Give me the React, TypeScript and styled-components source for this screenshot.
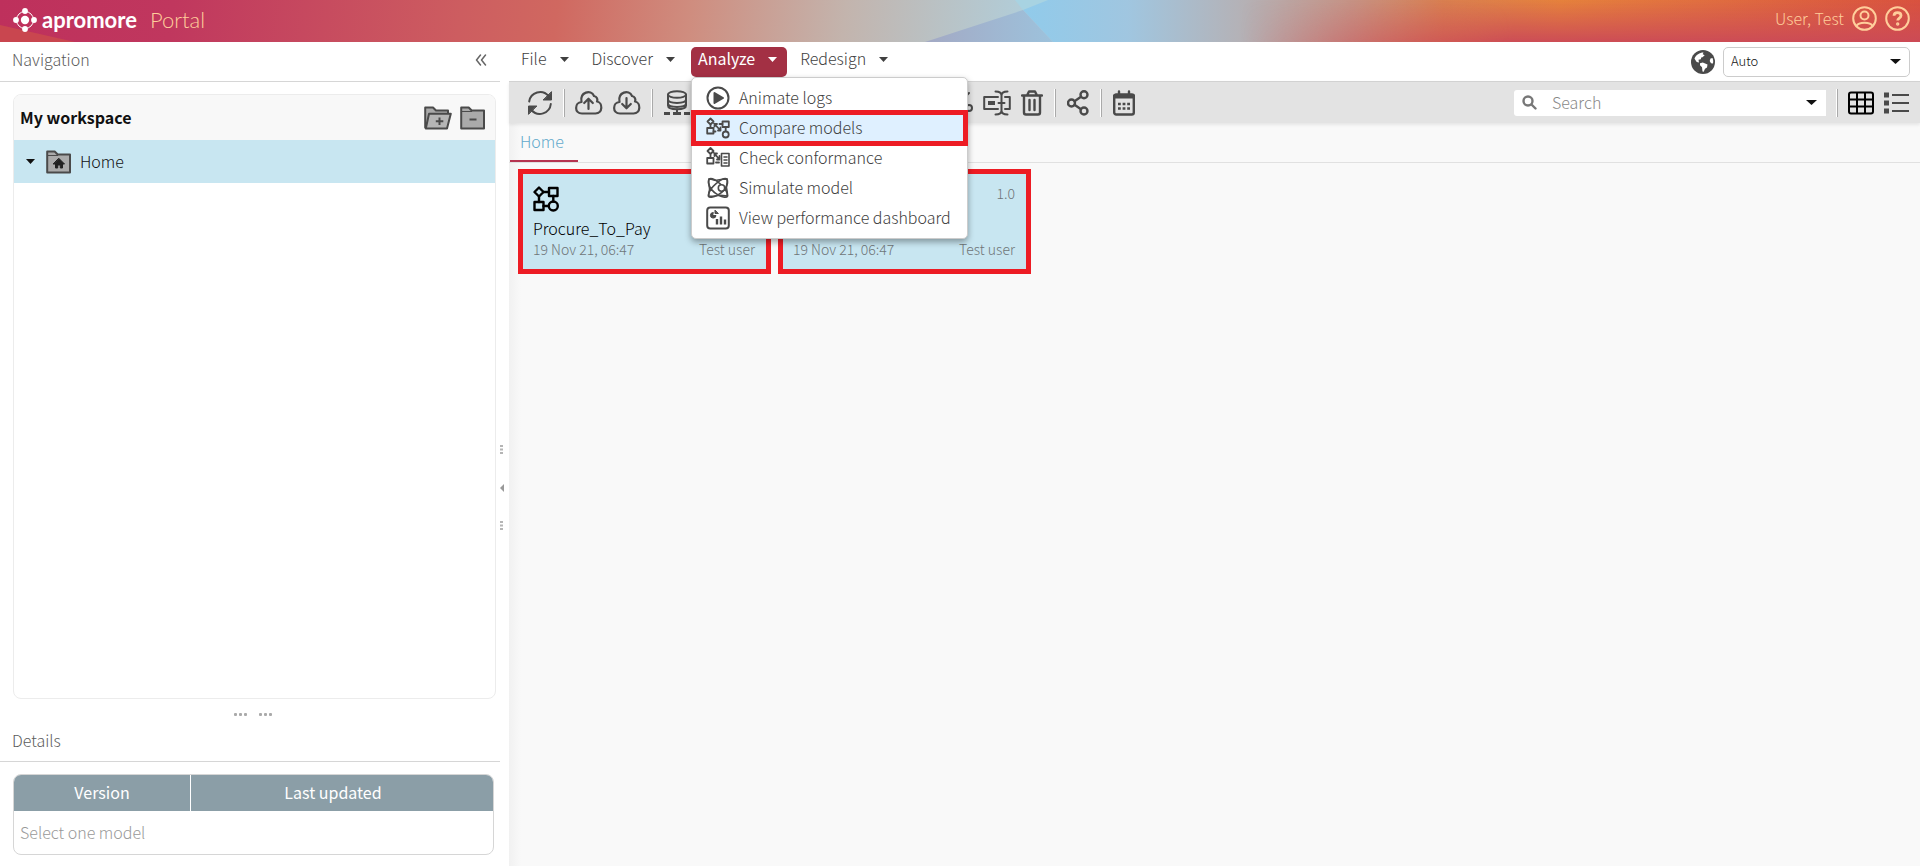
import React from 'react';
import styled, { createGlobalStyle, css } from 'styled-components';

const Global = createGlobalStyle`
  * { box-sizing: border-box; }
  html, body, #root { height: 100%; }
  body {
    margin: 0;
    color: #404040;
    background: #f9f9f9;
    font: 300 16px/24px "Noto Sans CJK SC", "Noto Sans", sans-serif;
  }
  button, input, select { font: inherit; color: inherit; }
  button { border: 0; padding: 0; background: none; cursor: pointer; }
  h1, h2, p { margin: 0; font: inherit; }
  svg { display: block; flex: none; }
`;

const Page = styled.div`
  display: flex;
  flex-direction: column;
  min-height: 100vh;
`;
const Label = styled.span`
  padding-bottom: 2px;
`;

const Header = styled.header`
  display: flex;
  align-items: center;
  justify-content: space-between;
  position: relative;
  height: 42px;
  padding: 0 10px 0 13px;
  overflow: hidden;
  background: linear-gradient(97deg, #be305c 0%, #c0375e 9%, #cd5d60 24%, #d06860 29%, #cf8d7f 36%, #c3b4ad 44%, #b9c2c5 49%, #b0cfdc 54%);
`;
const Backdrop = styled.svg`
  position: absolute;
  inset: 0;
  width: 100%;
  height: 100%;
`;
const Brand = styled.a`
  display: flex;
  align-items: center;
  position: relative;
  padding-bottom: 2px;
  color: #fff;
  text-decoration: none;
  font-family: Lato, sans-serif;
  font-size: 22px;
  line-height: 24px;
  font-weight: 700;
  gap: 5px;
`;
const Product = styled.span`
  margin-left: 8px;
  color: #ffce9b;
  font-weight: 300;
`;
const Account = styled.div`
  display: flex;
  align-items: center;
  position: relative;
  gap: 8px;
  color: #ffce9b;
  padding-bottom: 5px;
`;

const Body = styled.div`
  display: flex;
  flex: 1;
`;
const Sidebar = styled.aside`
  display: flex;
  flex-direction: column;
  width: 500px;
  background: #fff;
`;
const PanelTitle = styled.h2`
  display: flex;
  align-items: center;
  justify-content: space-between;
  height: 40px;
  padding: 0 13px 3px 12px;
  border-bottom: 1px solid #d6d6d6;
  color: #5c5c5c;
`;
const Workspace = styled.section`
  flex: 1;
  margin: 12px 4px 0 13px;
  border: 1px solid #ececec;
  border-radius: 8px;
  overflow: hidden;
`;
const WorkspaceHead = styled.div`
  display: flex;
  align-items: center;
  gap: 8px;
  height: 45px;
  padding: 0 10px 0 6px;
  background: #f8f8f8;
  color: #111;
  font-weight: 700;
`;
const Grow = styled.span`
  flex: 1;
`;
const TreeRow = styled.div`
  display: flex;
  align-items: center;
  height: 43px;
  padding-left: 12px;
  background: #c8e6f1;
  color: #111;
`;
const TreeLabel = styled(Label)`
  margin-left: 9px;
`;
const TreeToggle = styled.button`
  margin-right: 11px;
`;
const RowHandle = styled.div`
  display: flex;
  align-items: center;
  justify-content: center;
  gap: 12px;
  height: 30px;
  padding-left: 6px;
`;
const Details = styled.section`
  padding-bottom: 11px;
`;
const DetailsTitle = styled(PanelTitle)`
  height: 33px;
  padding-bottom: 9px;
`;
const TableFrame = styled.div`
  margin: 12px 6px 0 13px;
  border: 1px solid #d6d6d6;
  border-radius: 8px;
  overflow: hidden;
`;
const Table = styled.table`
  width: 100%;
  table-layout: fixed;
  border-collapse: separate;
  border-spacing: 0;
  th {
    height: 36px;
    padding: 0 0 2px;
    background: #8b9ea7;
    color: #fff;
    font-weight: 400;
  }
  th:first-child { width: 176px; }
  th + th { border-left: 1px solid #fff; padding-right: 18px; }
  td {
    height: 43px;
    padding: 0 6px 2px;
    color: #999;
  }
`;
const Splitter = styled.div`
  display: flex;
  flex-direction: column;
  align-items: center;
  justify-content: center;
  gap: 29px;
  width: 9px;
  padding: 68px 6px 0 0;
  background: #fff;
`;

const Main = styled.main`
  flex: 1;
  min-width: 0;
  background: linear-gradient(90deg, #f1f1f1, #f9f9f9 12px);
`;
const MenuBar = styled.nav`
  display: flex;
  align-items: center;
  gap: 6px;
  height: 39px;
  padding: 0 10px 0 5px;
  background: #fff;
`;
const MenuHolder = styled.div`
  position: relative;
`;
const MenuButton = styled.button<{ $open?: boolean }>`
  display: flex;
  align-items: center;
  gap: 13px;
  height: 30px;
  padding: 0 10px 5px 7px;
  border-radius: 5px;
  ${(p) => p.$open && css`
    background: #a33044;
    color: #fff;
    font-weight: 400;
  `}
`;
const Menu = styled.div`
  position: absolute;
  z-index: 2;
  top: 30px;
  left: 0;
  width: 277px;
  padding: 5px 0;
  border: 1px solid #ccc;
  border-radius: 5px;
  background: #fff;
  box-shadow: 0 3px 6px rgba(0, 0, 0, 0.35);
`;
const MenuItem = styled.button<{ $marked?: boolean }>`
  display: flex;
  align-items: center;
  position: relative;
  gap: 9px;
  width: 100%;
  height: 30px;
  padding: 0 14px;
  white-space: nowrap;
  ${(p) => p.$marked && css`
    background: #dff0ff;
    &::after {
      content: '';
      position: absolute;
      inset: -3px -1px;
      border: 5px solid #ed1c24;
    }
  `}
`;
const Language = styled.div`
  display: flex;
  align-items: center;
  gap: 8px;
`;
const SelectBox = styled.div`
  display: flex;
  align-items: center;
  position: relative;
  svg { position: absolute; right: 9px; pointer-events: none; }
`;
const Select = styled.select`
  appearance: none;
  width: 187px;
  height: 30px;
  padding: 0 7px 2px;
  border: 1px solid #ccc;
  border-radius: 5px;
  background: #fff;
  color: #111;
  font-size: 13px;
`;

const Toolbar = styled.div`
  display: flex;
  align-items: center;
  height: 42px;
  padding: 0 10px 0 18px;
  border-top: 1px solid #d2d2d2;
  background: #e3e3e3;
  box-shadow: 0 2px 3px rgba(0, 0, 0, 0.08);
`;
const Tools = styled.div`
  display: flex;
  align-items: center;
  gap: 10px;
`;
const Divider = styled.span`
  width: 2px;
  height: 28px;
  border-left: 1px solid #fff;
  border-right: 1px solid #aaa;
`;
const EditTools = styled(Tools)`
  margin-left: 258px;
  ${Divider} { margin: 0 1px; }
`;
const Search = styled.div`
  display: flex;
  align-items: center;
  width: 312px;
  height: 26px;
  padding: 0 9px 0 8px;
  border-radius: 3px 0 0 3px;
  background: #fff;
`;
const SearchInput = styled.input`
  flex: 1;
  min-width: 0;
  margin-left: 15px;
  padding: 0 0 2px;
  border: 0;
  outline: 0;
  background: none;
  &::placeholder { color: #888; opacity: 1; }
`;

const Tabs = styled.div`
  display: flex;
  height: 40px;
  border-bottom: 1px solid #e1e1e1;
`;
const Tab = styled.a`
  height: 39px;
  margin-left: 1px;
  padding: 6px 14px 0 10px;
  border-bottom: 2px solid #b63551;
  color: #62a9cb;
  text-decoration: none;
`;
const Cards = styled.div`
  display: flex;
  gap: 7px;
  padding: 6px 9px;
`;
const Card = styled.article`
  display: flex;
  flex-direction: column;
  width: 253px;
  height: 105px;
  padding: 12px 11px 9px 10px;
  border: 5px solid #ed1c24;
  background: #c8e6f1;
`;
const CardRow = styled.div`
  display: flex;
  justify-content: space-between;
  color: #6f7578;
  font-size: 14px;
  line-height: 20px;
`;
const Version = styled.span`
  line-height: 14px;
`;
const CardTitle = styled.h2`
  margin-top: 5px;
  color: #000;
  line-height: 22px;
`;

const Caret = ({ color = '#404040', size = 9 }: { color?: string; size?: number }) => (
  <svg width={size} height="5" viewBox="0 0 9 5" preserveAspectRatio="none"><path d="M0 0h9L4.500 5z" fill={color} /></svg>
);

const Stroke = ({ w = 26, h = 26, sw = 2.400, color = '#4a4a4a', children }: { w?: number; h?: number; sw?: number; color?: string; children: React.ReactNode }) => (
  <svg width={w} height={h} viewBox={`0 0 ${w} ${h}`} fill="none" stroke={color} strokeWidth={sw} strokeLinecap="round" strokeLinejoin="round">{children}</svg>
);

const Logo = () => (
  <svg width="24" height="24" viewBox="0 0 24 24" fill="#fff">
    <circle cx="12" cy="12" r="8.500" fill="none" stroke="#fff" strokeWidth="1" />
    <circle cx="12" cy="12" r="4.200" />
    <circle cx="12" cy="3" r="2.900" /><circle cx="12" cy="21" r="2.900" />
    <circle cx="3" cy="12" r="2.900" /><circle cx="21" cy="12" r="2.900" />
  </svg>
);
const UserIcon = () => (
  <Stroke w={25} h={25} color="#ffce9b" sw={2}>
    <circle cx="12.500" cy="12.500" r="11.300" /><circle cx="12.500" cy="9.500" r="4" />
    <path d="M4.500 20c1.500-3 4.500-3.200 8-3.200s6.500.2 8 3.200" />
  </Stroke>
);
const HelpIcon = () => (
  <Stroke w={25} h={25} color="#ffce9b" sw={2}>
    <circle cx="12.500" cy="12.500" r="11.300" />
    <path d="M9 9.800c.2-4.300 7-4 7-.2 0 2.700-3.300 2.400-3.300 5" strokeWidth="2.800" strokeLinecap="butt" />
    <circle cx="12.700" cy="18" r=".7" />
  </Stroke>
);
const FolderPlus = () => (
  <Stroke w={28} h={24} sw={2}>
    <path d="M1.200 21.500V1.500H9l3 3h12v4" fill="#aaa" />
    <path d="M5 7.800h21.800L23 22.500H1.800z" fill="#b5b5b5" />
    <path d="M15.500 11.500v7.500M11.800 15.200h7.500" strokeLinecap="butt" />
  </Stroke>
);
const FolderBase = ({ children }: { children: React.ReactNode }) => (
  <Stroke w={25} h={24} sw={2}>
    <path d="M1.200 22.500V1.500h7.500l3 3H24v18z" fill="#aaa" /><path d="M2 5.500h9.700" strokeWidth="1" />
    {children}
  </Stroke>
);
const Globe = () => (
  <svg width="24" height="24" viewBox="0 0 24 24">
    <circle cx="12" cy="12" r="12" fill="#4a4a4a" />
    <path d="M3.500 8.500C5 5 8.500 2.500 12.500 2.500l-.8 1.800 2 1-2.200 2-1.300.2-.4 1.800-2.300.5.500 2.700-2.300-.5-1.500-2.300zM9 13.200l2.800-.7 4.700 2-.5 3-2 1.300-1.300 3-1.200-.3-.5-4.200-2-2zM19.500 8.500l2-.5c.8 2 .9 3.500.5 5.500l-2-.3-1.300-2.200z" fill="#fff" />
  </svg>
);
const Refresh = () => (
  <Stroke sw={2}>
    <path d="M2.200 11.500A11 11 0 0 1 21.500 6M23.800 14A11 11 0 0 1 4.500 20" />
    <path d="M24.500 2v8h-8zM1.500 24v-8h8z" fill="#4a4a4a" strokeWidth="1" />
  </Stroke>
);
const Cloud = ({ down }: { down?: boolean }) => (
  <Stroke w={28} h={26} sw={2.200}>
    <path d="M7 23.500C-1 23.500-.5 12.500 6.500 12 4.500 2 16 -1 19 6c3 .5 4 3.500 3 5.500 6 1 6 12-1.500 12z" />
    <path d={down ? 'M13.500 8v10M9.200 14l4.300 4.300 4.300-4.300' : 'M13.500 19V9M9.200 13l4.300-4.300L17.800 13'} />
  </Stroke>
);
const Database = () => (
  <Stroke w={28} h={26} sw={2}>
    <ellipse cx="14" cy="4.500" rx="9" ry="3.300" />
    <path d="M5 4.500v11c0 5 18 5 18 0v-11M5 9.500c0 4.500 18 4.500 18 0M5 13.500c0 4.500 18 4.500 18 0M14 19v4" />
    <path d="M1 23.500h6M10 23.500h8M21 23.500h6" strokeWidth="3" strokeLinecap="butt" />
  </Stroke>
);
const Scissors = () => (
  <Stroke w={24} h={26} sw={2}><path d="M4 3l13 13M20 3L7 16" /><circle cx="5" cy="18" r="3" /><circle cx="20" cy="18" r="3" /></Stroke>
);
const Rename = () => (
  <Stroke w={28} h={26} sw={2}>
    <path d="M15 7H1.200v12H15M22 7h4.800v12H22M12.500 1.500c4 0 6 1.500 6 4 0-2.500 2-4 6-4M12.500 24.500c4 0 6-1.500 6-4 0 2.500 2 4 6 4M18.500 5v16M15.500 13h6" />
    <path d="M5 13h7" strokeWidth="4" strokeLinecap="butt" />
  </Stroke>
);
const Trash = () => (
  <Stroke w={22} h={26} sw={2.400}>
    <path d="M1 5.500h20M3 6v16.500q0 2 2 2h12q2 0 2-2V6M6.500 4.500l1.500-3h6l1.500 3M8.500 10v10M13.500 10v10" />
  </Stroke>
);
const Share = () => (
  <Stroke w={22} h={26} sw={2.400}>
    <circle cx="4.500" cy="13" r="3.500" /><circle cx="17" cy="4.800" r="3.500" /><circle cx="17" cy="21" r="3.500" />
    <path d="M7.500 11.200l6.500-4.400M7.500 14.800l6.500 4.400" />
  </Stroke>
);
const Calendar = () => (
  <Stroke w={22} h={26} sw={2.400}>
    <rect x="1.200" y="4.500" width="19.600" height="20" rx="2" /><path d="M1.200 6.500h19.600" strokeWidth="4" />
    <path d="M6 1.500V6M16 1.500V6" /><path d="M5 14h12M5 18.500h12" strokeWidth="2.600" strokeLinecap="butt" strokeDasharray="2.800 1.800" />
  </Stroke>
);
const GridIcon = () => (
  <Stroke w={26} h={24} sw={2} color="#000">
    <rect x="1" y="1.500" width="24" height="21" rx="2" /><path d="M9 2v20M17 2v20M1 8.500h24M1 15.500h24" />
  </Stroke>
);
const ListIcon = () => (
  <Stroke w={26} h={24} sw={2}>
    <path d="M8 4h17M8 12h17M8 20h17" strokeLinecap="butt" /><path d="M0 4h5M0 12h5M0 20h5" strokeWidth="5" strokeLinecap="butt" />
  </Stroke>
);
const Magnifier = () => (
  <Stroke w={15} h={15} sw={2.400} color="#777"><circle cx="6" cy="6" r="4.500" /><path d="M9.500 9.500l4 4" /></Stroke>
);
const ModelIcon = () => (
  <Stroke w={26} h={26} sw={2.400} color="#000">
    <path d="M6 1.500l4.500 4.500L6 10.500 1.500 6z" /><rect x="16" y="2" width="8.500" height="8" /><rect x="1.500" y="16" width="9" height="8" />
    <circle cx="20.300" cy="20" r="4.500" /><path d="M10.500 6H16M6 10.500V16M20.300 10v5.500M10.500 20h5" />
  </Stroke>
);
const Play = () => (
  <Stroke w={24} h={24} sw={2}><circle cx="12" cy="12" r="10.500" /><path d="M8.500 7l8.500 5-8.500 5z" fill="#4a4a4a" /></Stroke>
);
const Compare = () => (
  <Stroke w={24} h={24} sw={1.800}>
    <path d="M4.500 2.500L7.500 5.500 4.500 8.500 1.500 5.500zM4.500 8.500V12" /><rect x="1.200" y="12" width="6.300" height="5.500" />
    <path d="M8 7.500l6.500 7M8.500 10.500V8h2.500M14.500 11.500v3H12" />
    <rect x="16.500" y="5.500" width="6.300" height="5.500" />
    <path d="M19.700 11v4M13.500 8h3M7.500 15.500h2" /><circle cx="19.700" cy="18.500" r="3" />
  </Stroke>
);
const Conform = () => (
  <Stroke w={24} h={24} sw={1.800}>
    <path d="M4.500 2L7.500 5 4.500 8 1.500 5zM4.500 8v4M8 7l5 6M8.500 10V7.500H11M13.500 10v3.500H11" /><rect x="1.200" y="12" width="6.300" height="5.500" />
    <path d="M15.500 7.500H23v12.500h-7.500zM18 11h3M18 14h3M18 17h3" strokeWidth="1.600" /><path d="M10 16.500h3" />
  </Stroke>
);
const Simulate = () => (
  <Stroke w={24} h={24} sw={1.600}>
    <path d="M3 3c4-2.500 19 9 18.500 17-1 4-17-2-19-13-.2-2 0-3 .5-4zM21 3c-4-2.500-19 9-18.500 17 1 4 17-2 19-13 .2-2 0-3-.5-4z" />
    <path d="M3 3C8 3 7 5 12 4s6-1 9-1c1 5-1 6-.5 9s1 5 1 8c-5 0-5-1-9.500-.5S5 21 2.500 20c0-4 1.500-5 1-8S2 6 3 3z" /><circle cx="15.500" cy="12" r="3.200" fill="#fff" />
  </Stroke>
);
const Dashboard = () => (
  <Stroke w={24} h={24} sw={2}>
    <rect x="1.200" y="1.500" width="21.600" height="21" rx="3" />
    <path d="M11 13v5.500M15 10.500v8M19 13.500v5" strokeWidth="2.400" strokeLinecap="butt" />
    <path d="M7 6.500a2.800 2.800 0 1 0 3 3H7z" fill="#4a4a4a" strokeWidth="1" /><path d="M9 4.500v3h3z" fill="#4a4a4a" strokeWidth="1" />
  </Stroke>
);
const Dots = ({ vertical }: { vertical?: boolean }) => (
  <svg width={vertical ? 3 : 13} height={vertical ? 10 : 3} fill={vertical ? '#b5b5b5' : '#aaa'}>
    {[0, 1, 2].map((i) => vertical
      ? <rect key={i} y={i * 3.500} width="3" height="2" />
      : <rect key={i} x={i * 5} width="3" height="3" rx="1" />)}
  </svg>
);

const menuItems = [
  { label: 'Animate logs', icon: <Play /> },
  { label: 'Compare models', icon: <Compare />, marked: true },
  { label: 'Check conformance', icon: <Conform /> },
  { label: 'Simulate model', icon: <Simulate /> },
  { label: 'View performance dashboard', icon: <Dashboard /> },
];

export default function App() {
  return (
    <Page>
      <Global />
      <Header>
        <Backdrop viewBox="0 0 1920 42" preserveAspectRatio="none" aria-hidden="true">
          <defs>
            <linearGradient id="sky" gradientUnits="userSpaceOnUse" x1="1020" y1="0" x2="1920" y2="0">
              <stop offset="0" stopColor="#90cbeb" /><stop offset=".12" stopColor="#a0c6e0" /><stop offset=".25" stopColor="#b5b1b5" />
              <stop offset=".37" stopColor="#c69284" /><stop offset=".47" stopColor="#d97f50" /><stop offset=".6" stopColor="#e6823c" />
              <stop offset=".75" stopColor="#e17040" /><stop offset="1" stopColor="#d9523f" />
            </linearGradient>
            <linearGradient id="shade" x1="0" y1="0" x2="1" y2="0">
              <stop offset="0" stopColor="#a3a9c4" /><stop offset="1" stopColor="#9dc2dc" />
            </linearGradient>
            <linearGradient id="rose" x1="0" y1="0" x2="0" y2="1">
              <stop offset="0" stopColor="#cc4c56" stopOpacity="0" /><stop offset="1" stopColor="#cb4a57" stopOpacity=".95" />
            </linearGradient>
            <linearGradient id="reach" x1="0" y1="0" x2="1" y2="0">
              <stop offset="0" stopColor="#fff" stopOpacity="0" /><stop offset=".4" stopColor="#fff" />
            </linearGradient>
            <mask id="fade"><rect x="1240" width="680" height="42" fill="url(#reach)" /></mask>
          </defs>
          <path d="M0 25L75 42H0z" fill="#c9464f" />
          <path d="M1015 0h35l-27 10z" fill="#a8d3e2" />
          <path d="M1048 0H1920V42H1053L1023 10z" fill="url(#sky)" />
          <path d="M1023 10L925 42h128z" fill="url(#shade)" />
          <rect x="1240" width="680" height="42" fill="url(#rose)" mask="url(#fade)" />
        </Backdrop>
        <Brand href="#"><Logo />apromore<Product>Portal</Product></Brand>
        <Account><Label>User, Test</Label><UserIcon /><HelpIcon /></Account>
      </Header>
      <Body>
        <Sidebar>
          <PanelTitle><Label>Navigation</Label>
            <button aria-label="Collapse navigation"><Stroke w={12} h={12} sw={1.500} color="#666"><path d="M5.500 1L1.500 6l4 5M10.500 1l-4 5 4 5" /></Stroke></button>
          </PanelTitle>
          <Workspace>
            <WorkspaceHead><Label>My workspace</Label><Grow />
              <button aria-label="Add folder"><FolderPlus /></button>
              <button aria-label="Remove folder"><FolderBase><path d="M9.500 13.500h7" strokeLinecap="butt" /></FolderBase></button>
            </WorkspaceHead>
            <TreeRow>
              <TreeToggle aria-label="Toggle Home"><Caret color="#111" /></TreeToggle>
              <FolderBase><path d="M13 8.500l5.500 5.500h-2v4h-2.200v-3h-2.600v3H9.500v-4h-2z" fill="#222" stroke="#222" strokeWidth="1" /></FolderBase>
              <TreeLabel>Home</TreeLabel>
            </TreeRow>
          </Workspace>
          <RowHandle><Dots /><Dots /></RowHandle>
          <Details>
            <DetailsTitle><Label>Details</Label></DetailsTitle>
            <TableFrame>
              <Table>
                <thead><tr><th>Version</th><th>Last updated</th></tr></thead>
                <tbody><tr><td colSpan={2}>Select one model</td></tr></tbody>
              </Table>
            </TableFrame>
          </Details>
        </Sidebar>
        <Splitter>
          <Dots vertical />
          <svg width="4" height="8"><path d="M4 0v8L0 4z" fill="#999" /></svg>
          <Dots vertical />
        </Splitter>
        <Main>
          <MenuBar>
            <MenuButton><Label>File</Label><Caret /></MenuButton>
            <MenuButton><Label>Discover</Label><Caret /></MenuButton>
            <MenuHolder>
              <MenuButton $open aria-expanded="true"><Label>Analyze</Label><Caret color="#fff" /></MenuButton>
              <Menu>
                {menuItems.map((m) => <MenuItem key={m.label} $marked={m.marked}>{m.icon}<Label>{m.label}</Label></MenuItem>)}
              </Menu>
            </MenuHolder>
            <MenuButton><Label>Redesign</Label><Caret /></MenuButton>
            <Grow />
            <Language>
              <Globe />
              <SelectBox>
                <Select aria-label="Language" defaultValue="Auto"><option>Auto</option></Select>
                <Caret color="#111" size={11} />
              </SelectBox>
            </Language>
          </MenuBar>
          <Toolbar>
            <Tools>
              <button aria-label="Refresh"><Refresh /></button><Divider />
              <button aria-label="Upload"><Cloud /></button>
              <button aria-label="Download"><Cloud down /></button><Divider />
              <button aria-label="Data sources"><Database /></button>
            </Tools>
            <EditTools>
              <button aria-label="Cut"><Scissors /></button>
              <button aria-label="Rename"><Rename /></button>
              <button aria-label="Delete"><Trash /></button><Divider />
              <button aria-label="Share"><Share /></button><Divider />
              <button aria-label="Schedule"><Calendar /></button>
            </EditTools>
            <Grow />
            <Tools>
              <Search><Magnifier /><SearchInput aria-label="Search" placeholder="Search" /><Caret color="#111" size={11} /></Search>
              <Divider />
              <button aria-label="Tile view"><GridIcon /></button>
              <button aria-label="List view"><ListIcon /></button>
            </Tools>
          </Toolbar>
          <Tabs><Tab href="#">Home</Tab></Tabs>
          <Cards>
            {['Procure_To_Pay', ''].map((name, i) => (
              <Card key={i}>
                <CardRow><ModelIcon />{i === 1 && <Version>1.0</Version>}</CardRow>
                <CardTitle>{name || '\u00a0'}</CardTitle>
                <CardRow><span>19 Nov 21, 06:47</span><span>Test user</span></CardRow>
              </Card>
            ))}
          </Cards>
        </Main>
      </Body>
    </Page>
  );
}
